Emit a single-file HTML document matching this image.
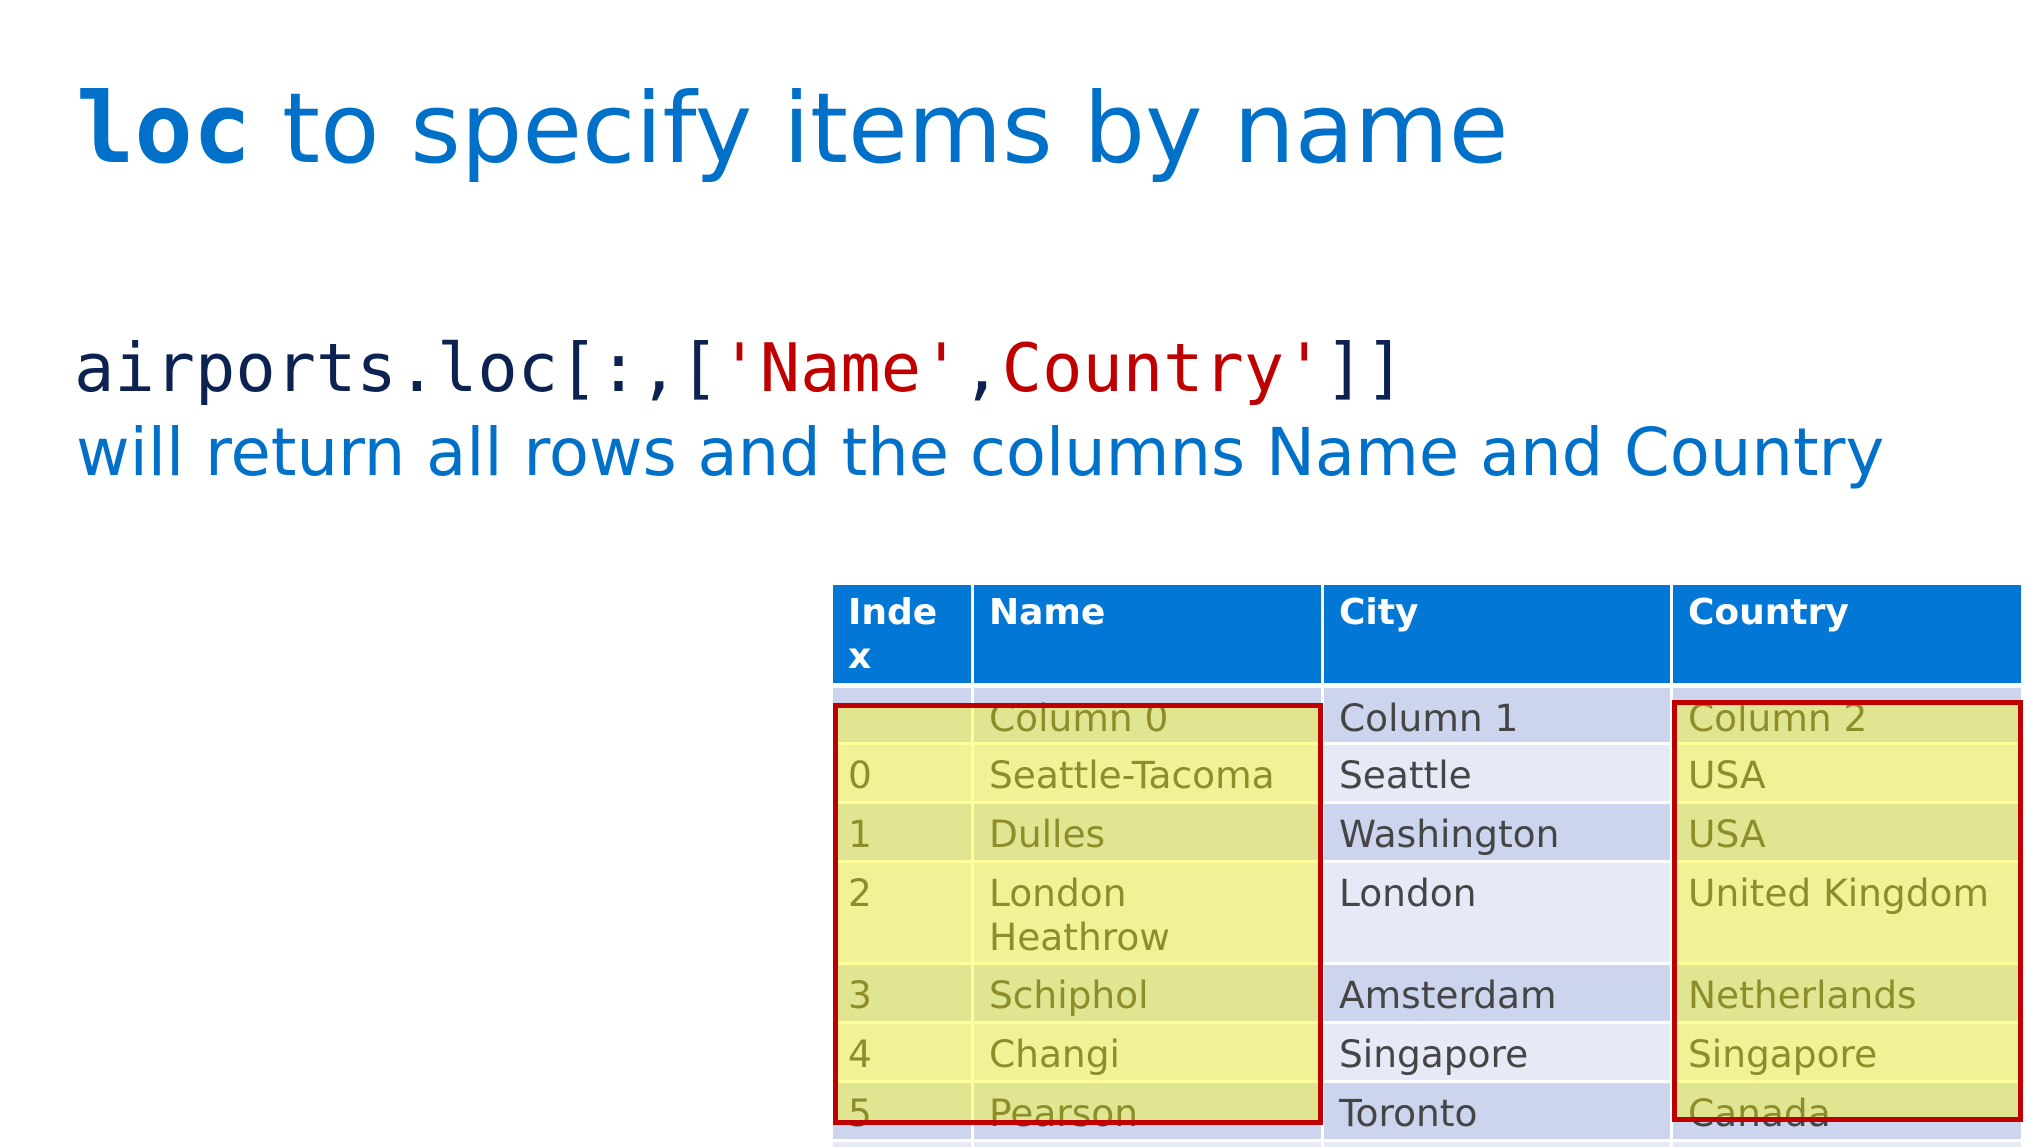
<!DOCTYPE html>
<html><head><meta charset="utf-8"><style>
html,body{margin:0;padding:0;background:#fff;width:2040px;height:1147px;overflow:hidden;position:relative;font-family:"DejaVu Sans","Liberation Sans",sans-serif}
.t{position:absolute;white-space:nowrap}
.c{position:absolute;box-sizing:border-box;padding:4px 0 0 15px;font-size:37.5px;line-height:44px;color:#454545;white-space:nowrap}
.h{background:#0277D6;color:#fff;font-weight:bold;padding-top:6px;font-size:36px}
.d{background:#CDD5EE}.l{background:#E6EAF6}
.y{position:absolute;background:rgba(255,255,0,0.39)}
.r{position:absolute;border:5px solid #C00000;box-sizing:border-box}
</style></head><body>
<div class="t" style="left:76px;top:68px;font-size:97px;line-height:122px;color:#0070C8"><span style="font-family:'DejaVu Sans Mono','Liberation Mono',monospace;font-weight:bold">loc</span> to specify items by name</div>
<div class="t" style="left:74px;top:326px;font-size:67px;line-height:84px;color:#0C2250;font-family:'DejaVu Sans Mono','Liberation Mono',monospace">airports.loc[:,[<span style="color:#C00000">'Name'</span>,<span style="color:#C00000">Country'</span>]]</div>
<div class="t" style="left:76px;top:412px;font-size:65.5px;line-height:82px;color:#0070C8">will return all rows and the columns Name and Country</div>

<div class="c h" style="left:833px;top:585px;width:138px;height:98px">Inde<br>x</div>
<div class="c h" style="left:974px;top:585px;width:347px;height:98px">Name</div>
<div class="c h" style="left:1324px;top:585px;width:346px;height:98px">City</div>
<div class="c h" style="left:1673px;top:585px;width:348px;height:98px">Country</div>

<div class="c d" style="left:833px;top:688px;width:138px;height:54px"></div>
<div class="c d" style="left:974px;top:688px;width:347px;height:54px;padding-top:8px">Column 0</div>
<div class="c d" style="left:1324px;top:688px;width:346px;height:54px;padding-top:8px">Column 1</div>
<div class="c d" style="left:1673px;top:688px;width:348px;height:54px;padding-top:8px">Column 2</div>

<div class="c l" style="left:833px;top:745px;width:138px;height:56px;padding-top:8px">0</div>
<div class="c l" style="left:974px;top:745px;width:347px;height:56px;padding-top:8px">Seattle-Tacoma</div>
<div class="c l" style="left:1324px;top:745px;width:346px;height:56px;padding-top:8px">Seattle</div>
<div class="c l" style="left:1673px;top:745px;width:348px;height:56px;padding-top:8px">USA</div>

<div class="c d" style="left:833px;top:804px;width:138px;height:56px;padding-top:8px">1</div>
<div class="c d" style="left:974px;top:804px;width:347px;height:56px;padding-top:8px">Dulles</div>
<div class="c d" style="left:1324px;top:804px;width:346px;height:56px;padding-top:8px">Washington</div>
<div class="c d" style="left:1673px;top:804px;width:348px;height:56px;padding-top:8px">USA</div>

<div class="c l" style="left:833px;top:863px;width:138px;height:99px;padding-top:8px">2</div>
<div class="c l" style="left:974px;top:863px;width:347px;height:99px;padding-top:8px">London<br>Heathrow</div>
<div class="c l" style="left:1324px;top:863px;width:346px;height:99px;padding-top:8px">London</div>
<div class="c l" style="left:1673px;top:863px;width:348px;height:99px;padding-top:8px">United Kingdom</div>

<div class="c d" style="left:833px;top:965px;width:138px;height:56px;padding-top:8px">3</div>
<div class="c d" style="left:974px;top:965px;width:347px;height:56px;padding-top:8px">Schiphol</div>
<div class="c d" style="left:1324px;top:965px;width:346px;height:56px;padding-top:8px">Amsterdam</div>
<div class="c d" style="left:1673px;top:965px;width:348px;height:56px;padding-top:8px">Netherlands</div>

<div class="c l" style="left:833px;top:1024px;width:138px;height:56px;padding-top:8px">4</div>
<div class="c l" style="left:974px;top:1024px;width:347px;height:56px;padding-top:8px">Changi</div>
<div class="c l" style="left:1324px;top:1024px;width:346px;height:56px;padding-top:8px">Singapore</div>
<div class="c l" style="left:1673px;top:1024px;width:348px;height:56px;padding-top:8px">Singapore</div>

<div class="c d" style="left:833px;top:1083px;width:138px;height:56px;padding-top:8px">5</div>
<div class="c d" style="left:974px;top:1083px;width:347px;height:56px;padding-top:8px">Pearson</div>
<div class="c d" style="left:1324px;top:1083px;width:346px;height:56px;padding-top:8px">Toronto</div>
<div class="c d" style="left:1673px;top:1083px;width:348px;height:56px;padding-top:8px">Canada</div>

<div class="c l" style="left:833px;top:1142px;width:138px;height:20px"></div>
<div class="c l" style="left:974px;top:1142px;width:347px;height:20px"></div>
<div class="c l" style="left:1324px;top:1142px;width:346px;height:20px"></div>
<div class="c l" style="left:1673px;top:1142px;width:348px;height:20px"></div>

<div class="y" style="left:833px;top:703px;width:490px;height:422px"></div>
<div class="y" style="left:1672px;top:700px;width:350px;height:422px"></div>
<div class="r" style="left:833px;top:703px;width:490px;height:422px"></div>
<div class="r" style="left:1672px;top:700px;width:351px;height:422px"></div>
</body></html>
